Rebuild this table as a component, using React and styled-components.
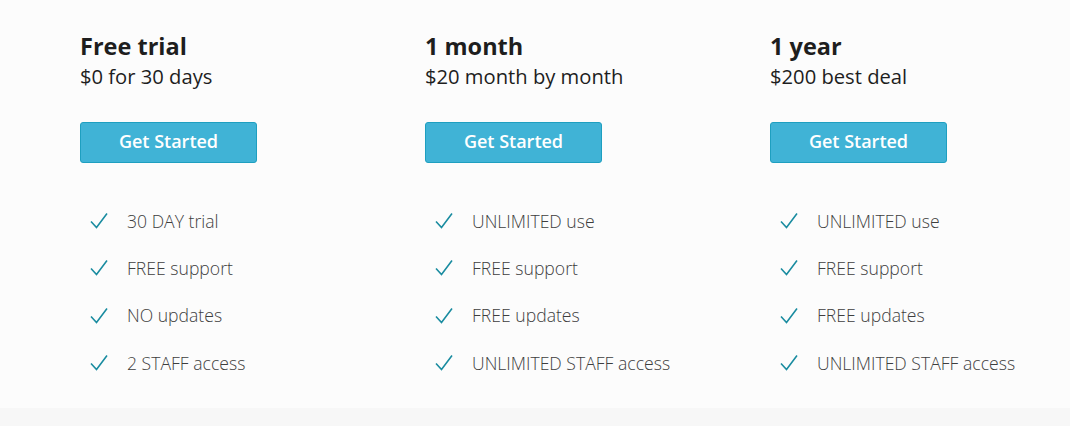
import React from 'react'
import styled, { createGlobalStyle } from 'styled-components'

const GlobalStyle = createGlobalStyle`
  body {
    margin: 0;
    background: #f7f7f7;
    font-family: "Open Sans", "Liberation Sans", sans-serif;
  }
`

const Section = styled.section`
  height: 408px;
  box-sizing: border-box;
  background: #fcfcfc;
  padding: 30px 0 0 80px;
  display: grid;
  grid-template-columns: repeat(3, 345px);
`

const Plan = styled.div`
  display: flex;
  flex-direction: column;
`

const Title = styled.h2`
  margin: 0;
  font-size: 23.5px;
  line-height: 32px;
  font-weight: 700;
  color: #1e1e1e;
`

const Price = styled.p`
  margin: 0;
  font-size: 20.2px;
  line-height: 28px;
  color: #1e1e1e;
`

const StartButton = styled.button`
  margin-top: 32px;
  width: 177px;
  height: 41px;
  box-sizing: border-box;
  padding: 0 0 3px;
  background: #40b3d6;
  border: 1px solid #1e9fc0;
  border-radius: 3px;
  color: #fff;
  font-family: inherit;
  font-size: 18px;
  font-weight: 600;
  cursor: pointer;
`

const Features = styled.ul`
  list-style: none;
  margin: 34px 0 0;
  padding: 0 0 0 10px;
  display: flex;
  flex-direction: column;
`

const Feature = styled.li`
  display: flex;
  align-items: center;
  gap: 19px;
  height: 47.3px;
  font-size: 17.6px;
  font-weight: 300;
  color: #3e3e3e;
`

const Check = () => (
  <svg width="18" height="17" viewBox="0 0 18 17" fill="none">
    <path d="M1 9.5L6.5 15.5L17 1.5" stroke="#1a8ca0" strokeWidth="1.6" />
  </svg>
)

const plans = [
  {
    title: 'Free trial',
    price: '$0 for 30 days',
    features: ['30 DAY trial', 'FREE support', 'NO updates', '2 STAFF access'],
  },
  {
    title: '1 month',
    price: '$20 month by month',
    features: ['UNLIMITED use', 'FREE support', 'FREE updates', 'UNLIMITED STAFF access'],
  },
  {
    title: '1 year',
    price: '$200 best deal',
    features: ['UNLIMITED use', 'FREE support', 'FREE updates', 'UNLIMITED STAFF access'],
  },
]

const App = () => {
  return (
    <>
      <GlobalStyle />
      <Section>
        {plans.map((plan) => (
          <Plan key={plan.title}>
            <Title>{plan.title}</Title>
            <Price>{plan.price}</Price>
            <StartButton>Get Started</StartButton>
            <Features>
              {plan.features.map((f) => (
                <Feature key={f}>
                  <Check />
                  {f}
                </Feature>
              ))}
            </Features>
          </Plan>
        ))}
      </Section>
    </>
  )
}

export default App
